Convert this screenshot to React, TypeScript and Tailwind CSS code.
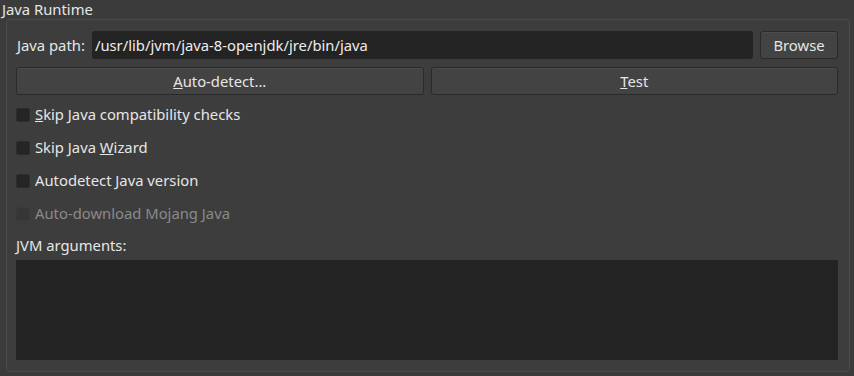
import type { ReactNode } from "react";

function Check({ label, disabled }: { label: ReactNode; disabled?: boolean }) {
  return (
    <div className="flex items-center h-[33px] gap-[5px]">
      <span
        className={`w-[14px] h-[14px] rounded-[2px] border ${
          disabled ? "bg-[#363636] border-[#3a3a3a]" : "bg-[#252525] border-[#2c2c2c]"
        }`}
      />
      <span className={disabled ? "text-[#8a8a8a]" : "text-[#e6e6e6]"}>{label}</span>
    </div>
  );
}

function Btn({ children, className }: { children: ReactNode; className?: string }) {
  return (
    <button
      className={`h-[28px] rounded-[3px] border border-[#2a2a2a] bg-[#434343] text-[#e6e6e6] shadow-[inset_0_1px_0_#4c4c4c] ${className ?? ""}`}
    >
      {children}
    </button>
  );
}

export default function App() {
  return (
    <div
      className="w-[854px] h-[376px] bg-[#3b3b3b] text-[14.8px] text-[#e6e6e6] relative"
      style={{ fontFamily: '"Noto Sans", "Open Sans", sans-serif' }}
    >
      <div className="absolute left-[2px] top-0 leading-[18px] whitespace-nowrap">Java Runtime</div>
      <div className="absolute left-[6px] top-[19px] w-[844px] h-[353px] border border-[#4b4b4b] rounded-[3px] bg-[#3d3d3d] pl-[9px] pr-[11px] pt-[11px]">
        <div className="flex items-center gap-[7px]">
          <span className="shrink-0 whitespace-nowrap pl-[1px]">
            <u>J</u>ava path:
          </span>
          <div className="flex-1 min-w-0 h-[28px] bg-[#232323] rounded-[3px] flex items-center px-[3px] text-[#ececec] whitespace-nowrap">
            /usr/lib/jvm/java-8-openjdk/jre/bin/java
          </div>
          <Btn className="w-[78px] shrink-0">Browse</Btn>
        </div>
        <div className="flex gap-[7px] mt-[8px]">
          <Btn className="flex-1">
            <u>A</u>uto-detect...
          </Btn>
          <Btn className="flex-1">
            <u>T</u>est
          </Btn>
        </div>
        <div className="mt-[3px]">
          <Check label={<><u>S</u>kip Java compatibility checks</>} />
          <Check label={<>Skip Java <u>W</u>izard</>} />
          <Check label="Autodetect Java version" />
          <Check label="Auto-download Mojang Java" disabled />
        </div>
        <div className="h-[30px] flex items-center">JVM arguments:</div>
        <div className="h-[100px] bg-[#232323]" />
      </div>
    </div>
  );
}
